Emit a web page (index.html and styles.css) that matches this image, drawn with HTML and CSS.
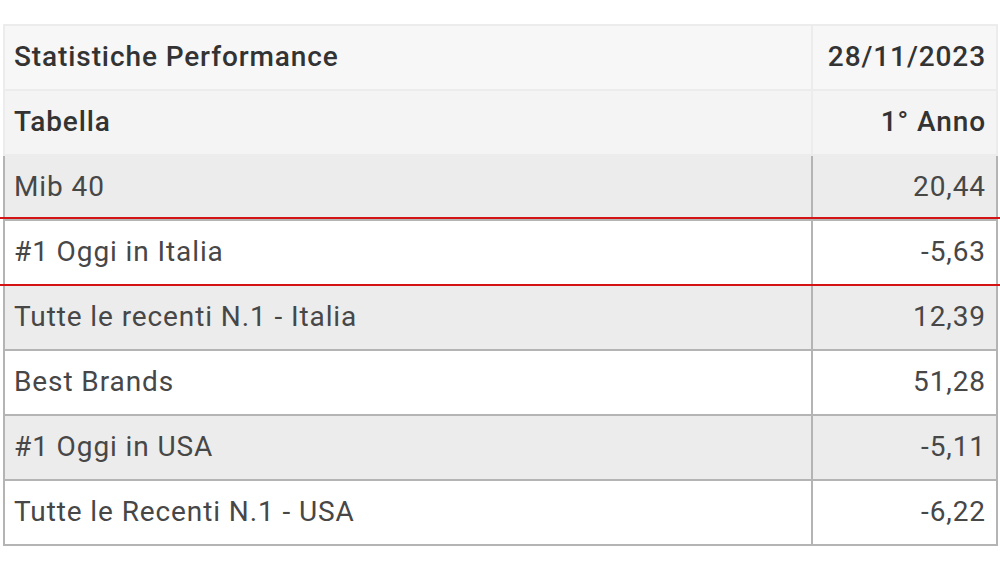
FILE: index.html
```html
<!DOCTYPE html>
<html lang="it">
<head>
<meta charset="utf-8">
<link rel="stylesheet" href="styles.css">
</head>
<body>
<div class="page">
  <table class="perf">
    <colgroup><col class="c-name"><col class="c-val"></colgroup>
    <thead>
      <tr class="h1"><th>Statistiche Performance</th><th class="num">28/11/2023</th></tr>
      <tr class="h2"><th>Tabella</th><th class="num">1° Anno</th></tr>
    </thead>
    <tbody>
      <tr class="odd"><td>Mib 40</td><td class="num">20,44</td></tr>
      <tr><td>#1 Oggi in Italia</td><td class="num">-5,63</td></tr>
      <tr class="odd"><td>Tutte le recenti N.1 - Italia</td><td class="num">12,39</td></tr>
      <tr><td>Best Brands</td><td class="num">51,28</td></tr>
      <tr class="odd"><td>#1 Oggi in USA</td><td class="num">-5,11</td></tr>
      <tr><td>Tutte le Recenti N.1 - USA</td><td class="num">-6,22</td></tr>
    </tbody>
  </table>
  <div class="highlight"></div>
</div>
</body>
</html>
```
FILE: styles.css
```css
html, body { margin: 0; padding: 0; background: #fff; }
.page {
  position: relative;
  width: 1000px;
  height: 562px;
  padding: 24px 4px 0 3px;
  box-sizing: border-box;
  font-family: Roboto, "Noto Sans", sans-serif;
}
.perf {
  width: 993px;
  border-collapse: collapse;
  table-layout: fixed;
  font-size: 28px;
  letter-spacing: 0.9px;
}
.c-name { width: 808px; }
.c-val { width: 185px; }
.perf th, .perf td {
  height: 65px;
  padding: 0 10px 3px 9px;
  box-sizing: border-box;
  text-align: left;
  white-space: nowrap;
}
.perf th {
  font-weight: 500;
  color: #333;
  background: #f7f7f7;
  border: 2px solid #ececec;
}
.perf .h2 th { background: #f4f4f4; }
.perf td {
  color: #474747;
  border: 2px solid #b4b4b4;
  background: #fff;
}
.perf tr.odd td { background: #ececec; }
.perf .num { text-align: right; }
.highlight {
  position: absolute;
  left: 0;
  right: 0;
  top: 217px;
  height: 69px;
  border-top: 2px solid #d41414;
  border-bottom: 2px solid #d41414;
  box-sizing: border-box;
  pointer-events: none;
}
```
